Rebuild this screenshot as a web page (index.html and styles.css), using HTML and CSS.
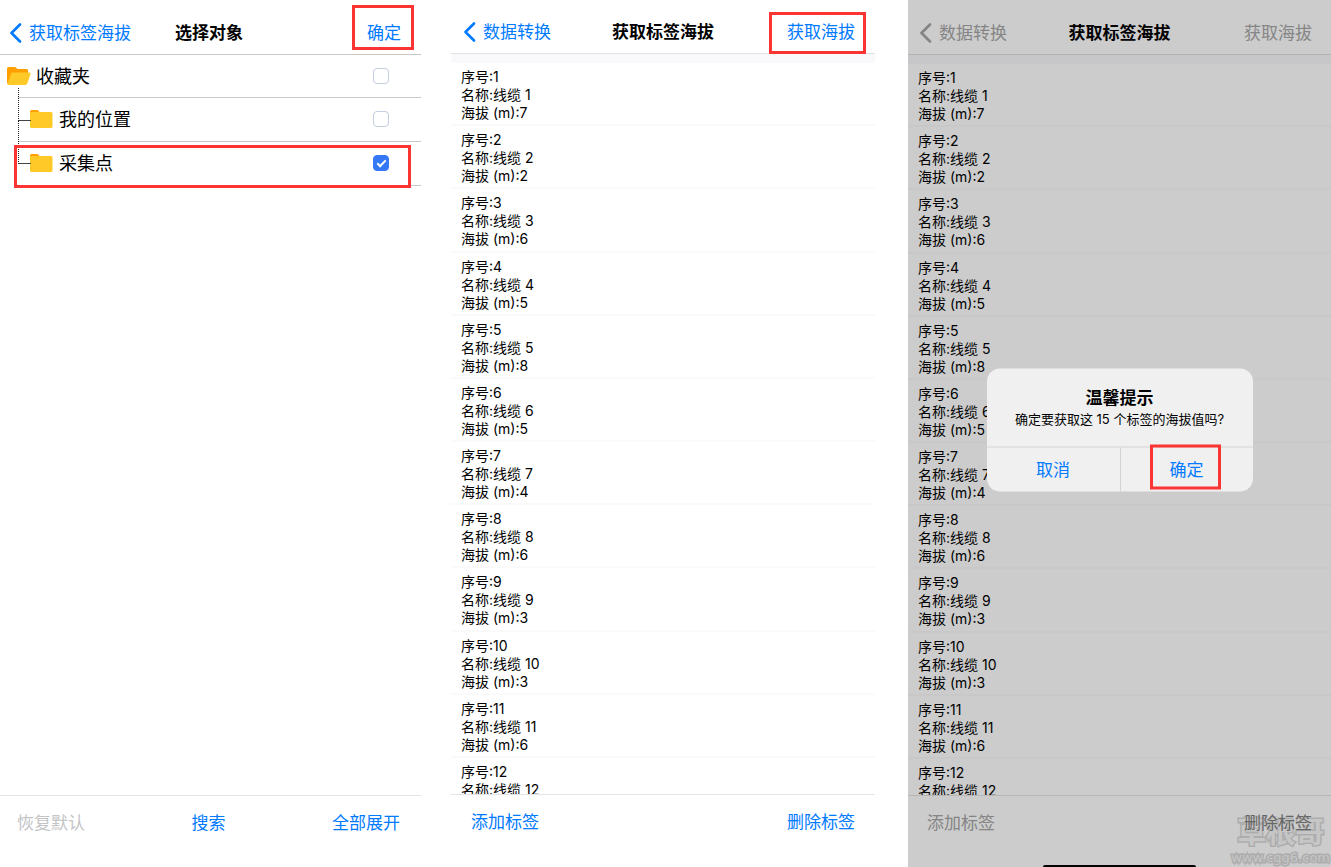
FILE: index.html
```html
<!DOCTYPE html>
<html lang="zh-CN">
<head>
<meta charset="utf-8">
<title>获取标签海拔</title>
<link rel="stylesheet" href="styles.css">
</head>
<body>
<svg class="defs" aria-hidden="true">
  <symbol id="chevron" viewBox="0 0 12 20"><path d="M10.5 1.5 2 10l8.500 8.500" fill="none" stroke="currentColor" stroke-width="2.600" stroke-linecap="round" stroke-linejoin="round"/></symbol>
  <symbol id="folder" viewBox="0 0 24 20"><path d="M1 4V2.500Q1 1 2.500 1h5.500q1 0 1.500.7L11 3.500V6H1z" fill="#ffa000"/><rect x="1" y="3" width="22.500" height="16" rx="1.500" fill="#ffca28"/></symbol>
  <symbol id="folder-open" viewBox="0 0 24 20"><path d="M0 17V2.500Q0 1 1.500 1h6q1 0 1.500.6L10.500 3h9Q21 3 21 4.500V8L2 18z" fill="#ffa000"/><path d="M.3 18.800 4 7.800Q4.400 6.500 6 6.500h16.500q1.500 0 1 1.500l-3 9q-.6 2-2.500 2H1Q.4 19 .3 18.800z" fill="#ffca28"/></symbol>
</svg>
<main class="screens">
  <section class="screen screen-select">
    <header class="bar">
      <button class="back"><svg><use href="#chevron"/></svg>获取标签海拔</button>
      <h1>选择对象</h1>
      <button class="action">确定<span class="mark mark-ok"></span></button>
    </header>
    <div class="body">
      <ul class="tree">
        <li class="node root"><svg><use href="#folder-open"/></svg><label for="n1">收藏夹</label><input type="checkbox" id="n1"></li>
        <li class="node child"><svg><use href="#folder"/></svg><label for="n2">我的位置</label><input type="checkbox" id="n2"></li>
        <li class="node child last"><svg><use href="#folder"/></svg><label for="n3">采集点</label><input type="checkbox" id="n3" checked><span class="mark mark-row"></span></li>
      </ul>
    </div>
    <footer class="tools"><button disabled>恢复默认</button><button>搜索</button><button>全部展开</button></footer>
  </section>

  <section class="screen screen-list">
    <header class="bar">
      <button class="back"><svg><use href="#chevron"/></svg>数据转换</button>
      <h1>获取标签海拔</h1>
      <button class="action">获取海拔<span class="mark mark-fetch"></span></button>
    </header>
    <div class="body"><ul class="records"></ul></div>
    <footer class="tools"><button>添加标签</button><button>删除标签</button></footer>
  </section>

  <section class="screen screen-dialog">
    <header class="bar">
      <button class="back"><svg><use href="#chevron"/></svg>数据转换</button>
      <h1>获取标签海拔</h1>
      <button class="action">获取海拔</button>
    </header>
    <div class="body"><ul class="records"></ul></div>
    <footer class="tools"><button>添加标签</button><button class="remove">删除标签</button></footer>
    <div class="home"></div>
    <div class="dialog" role="alertdialog" aria-labelledby="dt" aria-describedby="dm">
      <h2 id="dt">温馨提示</h2>
      <p id="dm">确定要获取这 15 个标签的海拔值吗?</p>
      <div class="choices"><button>取消</button><button>确定<span class="mark mark-confirm"></span></button></div>
    </div>
    <div class="watermark"><strong>草根哥</strong><span>www.cgg6.com</span></div>
  </section>
</main>
<script src="app.js"></script>
</body>
</html>
```
FILE: styles.css
```css
* { box-sizing: border-box; }
body { margin: 0; background: #fff; color: #000; font-family: Inter, "Noto Sans CJK SC", sans-serif; }
h1, h2, p, ul { margin: 0; padding: 0; }
ul { list-style: none; }
button { border: 0; padding: 0; background: none; color: #007aff; font: inherit; font-size: 17px; line-height: 24px; position: relative; }
.defs { position: absolute; width: 0; height: 0; }

.screens { display: flex; height: 100vh; }
.screen { display: flex; flex-direction: column; position: relative; flex: 421 1 0; min-width: 0; }
.screen-list { flex-grow: 424; margin: 0 33px 0 30px; }
.screen-dialog { flex-grow: 423; background: #ccc; overflow: hidden; }

.bar { display: grid; grid-template-columns: 1fr auto 1fr; align-items: end; height: 55px; padding: 0 20px 9px; border-bottom: 1px solid #c8c8c8; flex: none; }
.bar h1 { font-size: 17px; line-height: 24px; font-weight: 700; }
.back { justify-self: start; display: flex; align-items: center; gap: 7px; margin-left: -8px; }
.back svg { width: 13px; height: 20px; }
.action { justify-self: end; }
.body { flex: 1; min-height: 0; overflow: hidden; }
.tools { display: flex; justify-content: space-between; align-items: start; height: 72px; padding: 15px 20px 0; border-top: 1px solid #e4e4e5; flex: none; }
.tools button { z-index: 1; }
.tools button:disabled { color: #c4c4c6; }

.screen-select .tools { padding: 15px 21px 0 17px; }
.screen-select .bar h1 { padding-right: 3px; }
.screen-select .back { margin-left: -11px; }
.screen-list .bar { height: 54px; border-color: #e0e0e4; }
.screen-list .tools { height: 73px; }
.screen-dialog .bar { padding: 0 19px 9px; border-color: #b2b2b4; }
.screen-dialog .tools { padding: 15px 19px 0; border-color: #b6b6b7; }
.screen-dialog .bar button, .screen-dialog .tools button { color: #858585; }
.screen-dialog .tools .remove { color: #666; }

.node { display: flex; align-items: center; position: relative; height: 44px; padding: 0 32px 0 29px; }
.root { height: 43px; padding-left: 7px; }
.node::after { content: ""; position: absolute; left: 18px; right: 0; bottom: 0; border-bottom: 1px solid #cacaca; }
.node svg { width: 24px; height: 20px; margin-bottom: 2px; }
.node label { flex: 1; margin-left: 6px; font-size: 18px; line-height: 26px; }
.root label { margin-left: 5px; }
.node input { appearance: none; width: 16px; height: 16px; margin: 0 0 2px; border: 1px solid #c5cee0; border-radius: 4px; background: #fff; }
.node input:checked { border-color: #3478f6; background: #3478f6; display: grid; place-items: center; }
.node input:checked::before { content: ""; width: 7px; height: 3px; margin-top: -2px; border: solid #fff; border-width: 0 0 2px 2px; transform: rotate(-45deg); }
.child::before { content: ""; position: absolute; left: 18px; top: -10px; width: 12px; height: 32px; border-left: 1px dotted #222; border-bottom: 1px solid #444; }
.last::before { top: -22px; height: 43px; }

.records { display: grid; grid-auto-rows: 1fr; min-height: 767px; border-top: 9px solid #f9f9fc; }
.records li { padding: 5px 10px 2px; border-bottom: 2px solid #fafafa; font-size: 14px; line-height: 18px; }
.screen-dialog .records { border-color: #c7c7c9; }
.screen-dialog .records li { border-color: #c8c8c8; }

.mark { position: absolute; border: 3px solid #fa3534; pointer-events: none; z-index: 2; }
.mark-ok { inset: -16px -13px -5px -15px; }
.mark-row { inset: 3px 10px -2px 14px; }
.mark-fetch { inset: -8px -11px -10px -18px; }
.mark-confirm { inset: -3px 32px 2px 29px; }

.home { position: absolute; left: 32%; right: 32%; bottom: 0; height: 2px; background: #000; border-radius: 2px 2px 0 0; }
.dialog { position: absolute; left: 50%; top: 50%; width: 266px; transform: translate(-50%, -50%); margin-top: -4px; border-radius: 13px; background: #f0f0f0; text-align: center; }
.dialog h2 { padding-top: 18px; font-size: 17px; line-height: 23px; }
.dialog p { padding-bottom: 19px; font-size: 13px; line-height: 18px; }
.choices { display: grid; grid-template-columns: 1fr 1fr; border-top: 1px solid #d3d3d3; }
.choices button { height: 44px; }
.choices button + button { border-left: 1px solid #d3d3d3; }
.watermark { position: absolute; right: 1px; bottom: 1px; display: flex; flex-direction: column; align-items: center; color: #c6c6c6; -webkit-text-stroke: 3px #adadad; paint-order: stroke fill; pointer-events: none; }
.watermark strong { font-size: 29px; line-height: 32px; }
.watermark span { font: 13px/17px "DejaVu Sans", sans-serif; }
```
FILE: app.js
```js
const altitudes = [7, 2, 6, 5, 8, 5, 4, 6, 3, 3, 6];
for (const list of document.querySelectorAll(".records")) {
  for (let index = 0; index < 12; index++) {
    const lines = [`序号:${index + 1}`, `名称:线缆 ${index + 1}`];
    if (index in altitudes) lines.push(`海拔 (m):${altitudes[index]}`);
    const item = document.createElement("li");
    for (const text of lines) {
      const line = document.createElement("div");
      line.textContent = text;
      item.append(line);
    }
    list.append(item);
  }
}
```
